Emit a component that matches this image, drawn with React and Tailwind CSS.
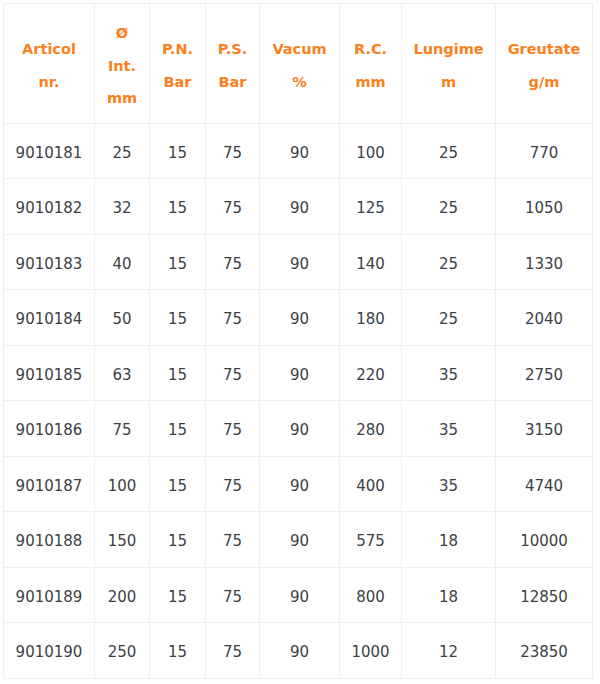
const headers = [
  ['Articol', 'nr.'],
  ['Ø', 'Int.', 'mm'],
  ['P.N.', 'Bar'],
  ['P.S.', 'Bar'],
  ['Vacum', '%'],
  ['R.C.', 'mm'],
  ['Lungime', 'm'],
  ['Greutate', 'g/m'],
]

const rows = [
  ['9010181', '25', '15', '75', '90', '100', '25', '770'],
  ['9010182', '32', '15', '75', '90', '125', '25', '1050'],
  ['9010183', '40', '15', '75', '90', '140', '25', '1330'],
  ['9010184', '50', '15', '75', '90', '180', '25', '2040'],
  ['9010185', '63', '15', '75', '90', '220', '35', '2750'],
  ['9010186', '75', '15', '75', '90', '280', '35', '3150'],
  ['9010187', '100', '15', '75', '90', '400', '35', '4740'],
  ['9010188', '150', '15', '75', '90', '575', '18', '10000'],
  ['9010189', '200', '15', '75', '90', '800', '18', '12850'],
  ['9010190', '250', '15', '75', '90', '1000', '12', '23850'],
]

const widths = ['w-[91px]', 'w-[55px]', 'w-[56px]', 'w-[54px]', 'w-[80px]', 'w-[62px]', 'w-[94px]', 'w-[97px]']

export default function App() {
  return (
    <div className="min-h-screen bg-white pt-[3px] pl-[3px] font-['DejaVu_Sans',Verdana,sans-serif]">
      <table className="table-fixed border-collapse w-[590px] text-center">
        <colgroup>
          {widths.map((w, i) => (
            <col key={i} className={w} />
          ))}
        </colgroup>
        <thead>
          <tr>
            {headers.map((h, i) => (
              <th
                key={i}
                className="border border-[#efefef] pt-[13px] pb-[8px] px-1 align-middle text-[14.5px] font-bold leading-[32.5px] text-[#fb7f1d]"
              >
                {h.map((line, j) => (
                  <div key={j}>{line}</div>
                ))}
              </th>
            ))}
          </tr>
        </thead>
        <tbody>
          {rows.map((r, i) => (
            <tr key={i}>
              {r.map((c, j) => (
                <td
                  key={j}
                  className="border border-[#efefef] pt-[13px] pb-[9px] px-1 text-[15px] leading-[32.5px] text-[#3b3f45]"
                >
                  {c}
                </td>
              ))}
            </tr>
          ))}
        </tbody>
      </table>
    </div>
  )
}
